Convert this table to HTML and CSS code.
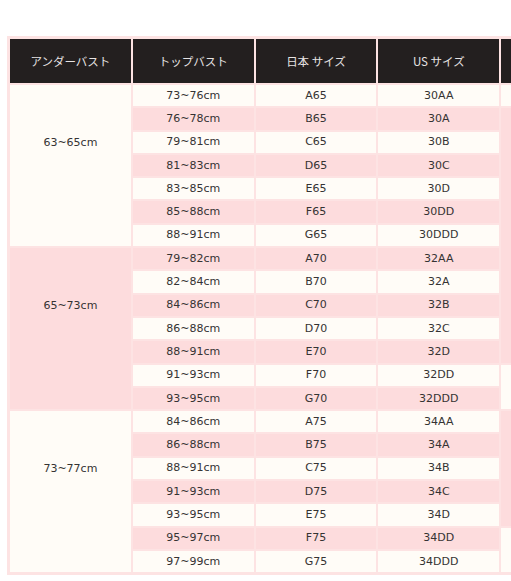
FILE: index.html
```html
<!DOCTYPE html>
<html lang="ja">
<head>
<meta charset="utf-8">
<title>サイズ表</title>
<link rel="stylesheet" href="styles.css">
</head>
<body>
<div class="wrap">
<table class="size-table">
<thead>
<tr><th>アンダーバスト</th><th>トップバスト</th><th>日本 サイズ</th><th>US サイズ</th><th></th></tr>
</thead>
<tbody>
<tr class="odd"><td rowspan="7" class="under cream">63~65cm</td><td>73~76cm</td><td>A65</td><td>30AA</td><td class="extra cream"></td></tr>
<tr class="even"><td>76~78cm</td><td>B65</td><td>30A</td><td rowspan="11" class="extra pink"></td></tr>
<tr class="odd"><td>79~81cm</td><td>C65</td><td>30B</td></tr>
<tr class="even"><td>81~83cm</td><td>D65</td><td>30C</td></tr>
<tr class="odd"><td>83~85cm</td><td>E65</td><td>30D</td></tr>
<tr class="even"><td>85~88cm</td><td>F65</td><td>30DD</td></tr>
<tr class="odd"><td>88~91cm</td><td>G65</td><td>30DDD</td></tr>
<tr class="even"><td rowspan="7" class="under pink">65~73cm</td><td>79~82cm</td><td>A70</td><td>32AA</td></tr>
<tr class="odd"><td>82~84cm</td><td>B70</td><td>32A</td></tr>
<tr class="even"><td>84~86cm</td><td>C70</td><td>32B</td></tr>
<tr class="odd"><td>86~88cm</td><td>D70</td><td>32C</td></tr>
<tr class="even"><td>88~91cm</td><td>E70</td><td>32D</td></tr>
<tr class="odd"><td>91~93cm</td><td>F70</td><td>32DD</td><td rowspan="2" class="extra cream"></td></tr>
<tr class="even"><td>93~95cm</td><td>G70</td><td>32DDD</td></tr>
<tr class="odd"><td rowspan="7" class="under cream">73~77cm</td><td>84~86cm</td><td>A75</td><td>34AA</td><td rowspan="5" class="extra pink"></td></tr>
<tr class="even"><td>86~88cm</td><td>B75</td><td>34A</td></tr>
<tr class="odd"><td>88~91cm</td><td>C75</td><td>34B</td></tr>
<tr class="even"><td>91~93cm</td><td>D75</td><td>34C</td></tr>
<tr class="odd"><td>93~95cm</td><td>E75</td><td>34D</td></tr>
<tr class="even"><td>95~97cm</td><td>F75</td><td>34DD</td><td rowspan="2" class="extra cream"></td></tr>
<tr class="odd"><td>97~99cm</td><td>G75</td><td>34DDD</td></tr>
</tbody>
</table>
</div>
</body>
</html>
```
FILE: styles.css
```css
html, body {
  margin: 0;
  padding: 0;
  background: #ffffff;
  overflow: hidden;
}
.wrap {
  width: 511px;
  height: 581px;
  overflow: hidden;
  padding: 36px 0 0 7px;
  box-sizing: border-box;
}
.size-table {
  border-collapse: separate;
  border-spacing: 2px;
  border: 1px solid #fde3e3;
  background: #fde3e3;
  table-layout: fixed;
  width: 618px;
  font-family: "DejaVu Sans", "Noto Sans CJK JP", sans-serif;
  font-size: 11px;
  color: #353333;
}
.size-table th {
  height: 44px;
  padding: 0;
  background: #231f1f;
  color: #e6e3e3;
  font-family: "Noto Sans CJK JP", "DejaVu Sans", sans-serif;
  font-weight: normal;
  font-size: 11.5px;
  text-align: center;
  vertical-align: middle;
}
.size-table td {
  height: 21.3px;
  padding: 0;
  text-align: center;
  vertical-align: middle;
  line-height: 14px;
}
.odd td {
  background: #fffcf7;
}
.even td {
  background: #fddcdd;
}
.size-table td.cream {
  background: #fffcf7;
}
.size-table td.pink {
  background: #fddcdd;
}
.size-table td.under {
  padding-bottom: 46px;
}
```
